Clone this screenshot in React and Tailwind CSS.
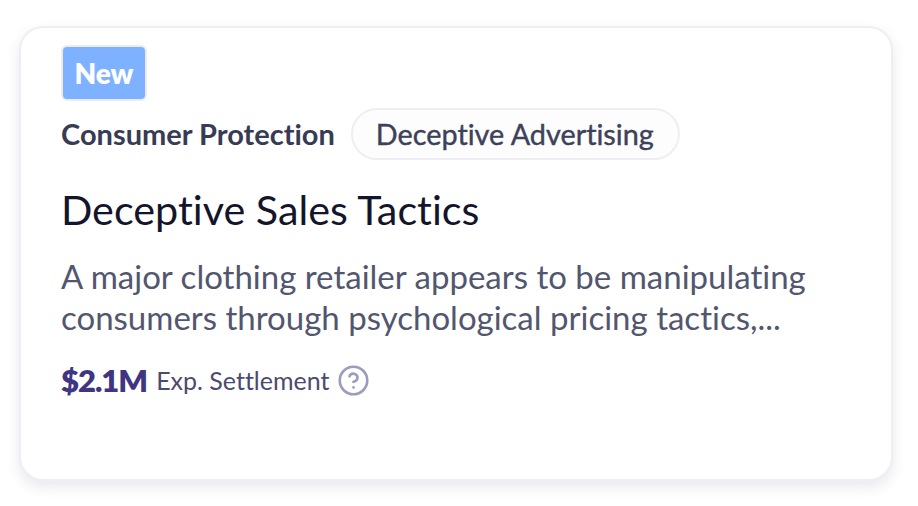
import { CircleHelp } from 'lucide-react'

export default function App() {
  return (
    <div className="min-h-[506px] bg-white pl-[19px] pt-[26px] pb-[25px] font-['Lato',sans-serif] [font-variant-ligatures:none]">
      {/* Card */}
      <div className="h-[455px] w-[874px] rounded-[24px] border-2 border-[#efeef3] bg-white pl-10 pt-[17px] shadow-[0_6px_14px_rgba(40,30,90,0.1)]">
        <div className="flex h-[56px] w-[86px] items-center justify-center rounded-[6px] border-2 border-[#ecebf3] bg-[#7eb1ff] text-[28px] font-extrabold text-white">
          New
        </div>

        <div className="mt-[7px] flex items-center gap-4">
          <span className="text-[29px] font-bold text-[#373b53]">Consumer Protection</span>
          <span className="flex h-[52px] items-center rounded-full border-2 border-[#efeef3] bg-[#fdfdfe] pl-[23px] pr-[24px] pt-[2px] text-[28.8px] text-[#3d4159] [-webkit-text-stroke:0.4px_#3d4159]">
            Deceptive Advertising
          </span>
        </div>

        <h2 className="mt-[25px] text-[41.3px] leading-[48px] font-normal text-[#14152b]">Deceptive Sales Tactics</h2>

        <p className="mt-[23px] w-[800px] text-[33px] leading-[41px] text-[#53566f]">
          A major clothing retailer appears to be manipulating consumers through psychological pricing tactics,...
        </p>

        <div className="mt-[19px] flex items-center">
          <span className="text-[31px] font-extrabold tracking-[-1px] text-[#3f3583]">$2.1M</span>
          <span className="ml-[9px] text-[25px] text-[#4c4a70]">Exp. Settlement</span>
          <CircleHelp className="ml-[8px] h-[33px] w-[33px] text-[#9c9cbf]" strokeWidth={1.9} />
        </div>
      </div>
    </div>
  )
}
